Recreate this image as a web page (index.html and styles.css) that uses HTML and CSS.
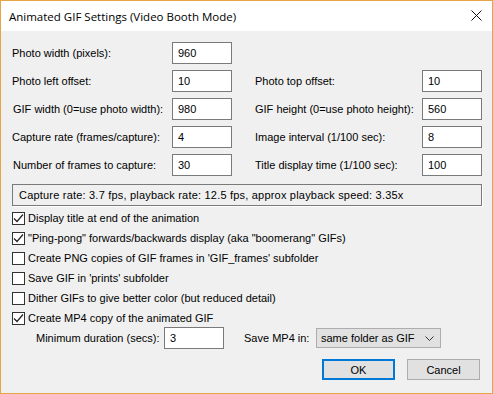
FILE: index.html
```html
<!DOCTYPE html>
<html lang="en">
<head>
    <meta charset="UTF-8">
    <title>Animated GIF Settings (Video Booth Mode)</title>
    <link rel="stylesheet" href="styles.css">
</head>
<body>
    <div class="window">
        <!-- Barra de título -->
        <div class="titlebar">
            <span class="title">Animated GIF Settings (Video Booth Mode)</span>
            <svg class="close" width="11" height="11" viewBox="0 0 11 11">
                <path d="M0.5 0.5 L10.5 10.5 M10.5 0.5 L0.5 10.5" stroke="#111" stroke-width="1" fill="none"/>
            </svg>
        </div>

        <div class="content">
            <!-- Campos numéricos -->
            <div class="fields">
                <label class="lbl">Photo width (pixels):</label>
                <input class="box" type="text" value="960">
                <span></span><span></span>

                <label class="lbl">Photo left offset:</label>
                <input class="box" type="text" value="10">
                <label class="lbl">Photo top offset:</label>
                <input class="box" type="text" value="10">

                <label class="lbl shift">GIF width (0=use photo width):</label>
                <input class="box" type="text" value="980">
                <label class="lbl">GIF height (0=use photo height):</label>
                <input class="box" type="text" value="560">

                <label class="lbl">Capture rate (frames/capture):</label>
                <input class="box" type="text" value="4">
                <label class="lbl">Image interval (1/100 sec):</label>
                <input class="box" type="text" value="8">

                <label class="lbl shift">Number of frames to capture:</label>
                <input class="box" type="text" value="30">
                <label class="lbl">Title display time (1/100 sec):</label>
                <input class="box" type="text" value="100">
            </div>

            <div class="info">Capture rate: 3.7 fps, playback rate: 12.5 fps, approx playback speed: 3.35x</div>

            <!-- Opções -->
            <div class="checks">
                <div class="check"><span class="cb on"></span>Display title at end of the animation</div>
                <div class="check"><span class="cb on"></span>"Ping-pong" forwards/backwards display (aka "boomerang" GIFs)</div>
                <div class="check"><span class="cb"></span>Create PNG copies of GIF frames in 'GIF_frames' subfolder</div>
                <div class="check"><span class="cb"></span>Save GIF in 'prints' subfolder</div>
                <div class="check"><span class="cb"></span>Dither GIFs to give better color (but reduced detail)</div>
                <div class="check"><span class="cb on"></span>Create MP4 copy of the animated GIF</div>
            </div>

            <div class="mp4-row">
                <label class="lbl dur">Minimum duration (secs):</label>
                <input class="box" type="text" value="3">
                <label class="lbl save">Save MP4 in:</label>
                <div class="select">
                    <span>same folder as GIF</span>
                    <svg width="9" height="5" viewBox="0 0 9 5">
                        <path d="M0.5 0.5 L4.5 4.5 L8.5 0.5" stroke="#333" stroke-width="1" fill="none"/>
                    </svg>
                </div>
            </div>

            <div class="buttons">
                <button class="btn default">OK</button>
                <button class="btn">Cancel</button>
            </div>
        </div>
    </div>

    <script>
        // Desenha o visto nas caixas marcadas
        document.querySelectorAll('.cb.on').forEach(cb => {
            cb.innerHTML = '<svg width="11" height="11" viewBox="0 0 11 11"><path d="M1 5.5 L4 8.5 L10 1.5" stroke="#222" stroke-width="1.2" fill="none"/></svg>';
        });
    </script>
</body>
</html>
```

FILE: styles.css
```css
body {
    margin: 0;
    background-color: #f0f0f0;
    font-family: "Liberation Sans", Arial, sans-serif;
    font-size: 11px;
    color: #000;
}
.window {
    width: 491px;
    height: 392px;
    border: 1px solid #e5a445;
    background-color: #f0f0f0;
}
.titlebar {
    height: 30px;
    background-color: white;
    display: flex;
    align-items: center;
    justify-content: space-between;
    padding: 0 10px 0 8px;
}
.title {
    font-family: "Open Sans", sans-serif;
    font-size: 11.5px;
    color: #000;
}
.close {
    margin-top: -1px;
}
.content {
    padding: 11px 11px 0 11px;
}
.fields {
    display: grid;
    grid-template-columns: 160px 60px 190px 60px;
    row-gap: 6px;
}
.fields > :nth-child(4n+3) {
    padding-left: 23px;
}
.lbl {
    display: flex;
    align-items: center;
    height: 22px;
    white-space: nowrap;
}
.shift {
    padding-left: 1px;
}
.box {
    width: 60px;
    height: 22px;
    box-sizing: border-box;
    border: 1px solid #7a7a7a;
    background-color: white;
    font-family: inherit;
    font-size: 11px;
    padding: 0 0 0 5px;
    margin: 0;
    outline: none;
}
.info {
    margin-top: 8px;
    height: 22px;
    width: 470px;
    box-sizing: border-box;
    border: 1px solid #7a7a7a;
    box-shadow: 1px 1px 0 white;
    display: flex;
    align-items: center;
    padding-left: 6px;
    letter-spacing: 0.2px;
}
.checks {
    margin-top: 2px;
}
.check {
    height: 20px;
    display: flex;
    align-items: center;
    white-space: nowrap;
}
.cb {
    width: 13px;
    height: 13px;
    box-sizing: border-box;
    border: 1px solid #333;
    background-color: white;
    margin-right: 3px;
    display: flex;
    align-items: center;
    justify-content: center;
}
.mp4-row {
    display: flex;
    align-items: center;
    margin-top: -1px;
    height: 22px;
}
.dur {
    padding-left: 24px;
    width: 128px;
}
.save {
    margin-left: 20px;
    width: 72px;
}
.select {
    width: 125px;
    height: 20px;
    box-sizing: border-box;
    border: 1px solid #adadad;
    background-color: #e1e1e1;
    display: flex;
    align-items: center;
    justify-content: space-between;
    padding: 0 6px 0 4px;
}
.buttons {
    display: flex;
    justify-content: flex-end;
    gap: 12px;
    margin-top: 10px;
    padding-right: 1px;
}
.btn {
    width: 73px;
    height: 21px;
    box-sizing: border-box;
    border: 1px solid #adadad;
    background-color: #e1e1e1;
    font-family: inherit;
    font-size: 11px;
    padding: 0;
}
.btn.default {
    border: 2px solid #0078d7;
}
```
